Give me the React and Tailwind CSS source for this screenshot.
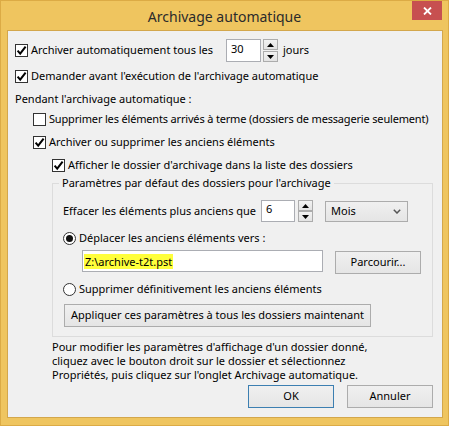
import React from "react";

const font = { fontFamily: '"Noto Sans", "Open Sans", sans-serif' };

function Check({ checked }) {
  return (
    <span className="w-[13px] h-[13px] border border-[#333333] bg-white flex items-center justify-center shrink-0">
      {checked && (
        <svg width="11" height="11" viewBox="0 0 11 11">
          <path d="M1.6 5.6 L4.2 8.6 L9.6 1.6" stroke="#000" strokeWidth="2" fill="none" />
        </svg>
      )}
    </span>
  );
}

function Radio({ checked }) {
  return (
    <span className="w-[13px] h-[13px] rounded-full border border-[#333333] bg-white flex items-center justify-center shrink-0">
      {checked && <span className="w-[7px] h-[7px] rounded-full bg-[#111]" />}
    </span>
  );
}

function Spin({ h }) {
  return (
    <div className="flex flex-col justify-between" style={{ height: h }}>
      <span className="w-[15px] h-[11px] border border-[#acacac] bg-gradient-to-b from-[#f2f2f2] to-[#e3e3e3] flex items-center justify-center">
        <svg width="7" height="4" viewBox="0 0 7 4"><path d="M0 4 L3.5 0 L7 4 Z" fill="#000" /></svg>
      </span>
      <span className="w-[15px] h-[11px] border border-[#acacac] bg-gradient-to-b from-[#f2f2f2] to-[#e3e3e3] flex items-center justify-center">
        <svg width="7" height="4" viewBox="0 0 7 4"><path d="M0 0 L7 0 L3.5 4 Z" fill="#000" /></svg>
      </span>
    </div>
  );
}

function Btn({ children, className = "" }) {
  return (
    <div className={"border border-[#acacac] bg-gradient-to-b from-[#f0f0f0] to-[#e5e5e5] flex items-center justify-center text-black whitespace-nowrap " + className}>
      {children}
    </div>
  );
}

export default function App() {
  return (
    <div className="w-[449px] h-[426px] bg-[#efc55f] border border-[#dcab45] flex flex-col text-[11px] text-black whitespace-nowrap" style={font}>
      <div className="h-[29px] relative flex items-center justify-center shrink-0">
        <span className="text-[14px] text-[#2b2b2b] mt-[1px]">Archivage automatique</span>
        <div className="absolute top-0 right-[6px] w-[30px] h-[19px] bg-[#c75050] flex items-center justify-center">
          <svg width="9" height="8" viewBox="0 0 9 8">
            <path d="M1 0.5 L8 7.5 M8 0.5 L1 7.5" stroke="#fff" strokeWidth="1.8" />
          </svg>
        </div>
      </div>
      <div className="ml-[6px] w-[436px] h-[388px] border border-[#d3a74c] bg-[#f0f0f0] pt-[8px] pl-[7px] flex flex-col">
        <div className="flex items-center h-[23px]">
          <Check checked />
          <span className="ml-[3px] w-[195px]">Archiver automatiquement tous les</span>
          <div className="w-[35px] h-[23px] border border-[#abadb3] bg-white pl-[4px] flex items-start pt-[1px]">30</div>
          <div className="ml-[2px]"><Spin h={23} /></div>
          <span className="ml-[5px]">jours</span>
        </div>
        <div className="flex items-center h-[16px] mt-[6px]">
          <Check checked />
          <span className="ml-[3px]">Demander avant l'exécution de l'archivage automatique</span>
        </div>
        <div className="flex items-center h-[16px] mt-[7px]">
          <span>Pendant l'archivage automatique :</span>
        </div>
        <div className="flex items-center h-[16px] mt-[4px] pl-[18px]">
          <Check />
          <span className="ml-[3px] tracking-[-0.17px]">Supprimer les éléments arrivés à terme (dossiers de messagerie seulement)</span>
        </div>
        <div className="flex items-center h-[16px] mt-[7px] pl-[18px]">
          <Check checked />
          <span className="ml-[3px]">Archiver ou supprimer les anciens éléments</span>
        </div>
        <div className="flex items-center h-[16px] mt-[7px] pl-[37px]">
          <Check checked />
          <span className="ml-[3px]">Afficher le dossier d'archivage dans la liste des dossiers</span>
        </div>

        <div className="ml-[37px] mt-[10px] w-[381px] relative border border-[#dcdcdc] pt-[16px] pl-[10px] pb-[9px]">
          <span className="absolute top-[-9px] left-[6px] px-[3px] bg-[#f0f0f0] leading-[16px]">
            Paramètres par défaut des dossiers pour l'archivage
          </span>
          <div className="flex items-center h-[22px]">
            <span className="w-[198px]">Effacer les éléments plus anciens que</span>
            <div className="w-[34px] h-[22px] border border-[#abadb3] bg-white pl-[4px] flex items-start">6</div>
            <div className="ml-[3px]"><Spin h={22} /></div>
            <div className="ml-[12px] w-[83px] h-[21px] border border-[#acacac] bg-gradient-to-b from-[#f0f0f0] to-[#e5e5e5] flex items-center justify-between pl-[5px] pr-[6px]">
              <span>Mois</span>
              <svg width="8" height="5" viewBox="0 0 8 5"><path d="M0.8 0.8 L4 4 L7.2 0.8" stroke="#555" strokeWidth="1.5" fill="none" /></svg>
            </div>
          </div>
          <div className="flex items-center h-[16px] mt-[8px]">
            <Radio checked />
            <span className="ml-[3px]">Déplacer les anciens éléments vers :</span>
          </div>
          <div className="flex items-start mt-[4px] ml-[19px]">
            <div className="w-[241px] h-[22px] border border-[#abadb3] bg-white pl-[1px] pt-[3px] flex items-start">
              <span className="bg-[#ffff3c] px-[1px] leading-[15px]">Z:\archive-t2t.pst</span>
            </div>
            <Btn className="ml-[12px] mt-[1px] w-[86px] h-[23px]">Parcourir...</Btn>
          </div>
          <div className="flex items-center h-[16px] mt-[7px]">
            <Radio />
            <span className="ml-[3px]">Supprimer définitivement les anciens éléments</span>
          </div>
          <Btn className="mt-[7px] ml-[1px] w-[307px] h-[23px]">Appliquer ces paramètres à tous les dossiers maintenant</Btn>
        </div>

        <p className="ml-[37px] mt-[3px] leading-[14px]">
          Pour modifier les paramètres d'affichage d'un dossier donné,
          <br />
          cliquez avec le bouton droit sur le dossier et sélectionnez
          <br />
          Propriétés, puis cliquez sur l'onglet Archivage automatique.
        </p>
        <div className="flex justify-end pr-[9px] mt-[3px] gap-[13px]">
          <div className="w-[86px] h-[23px] border border-[#3c7fb1] bg-gradient-to-b from-[#f0f0f0] to-[#e5e5e5] flex items-center justify-center">OK</div>
          <Btn className="w-[86px] h-[23px]">Annuler</Btn>
        </div>
      </div>
    </div>
  );
}
